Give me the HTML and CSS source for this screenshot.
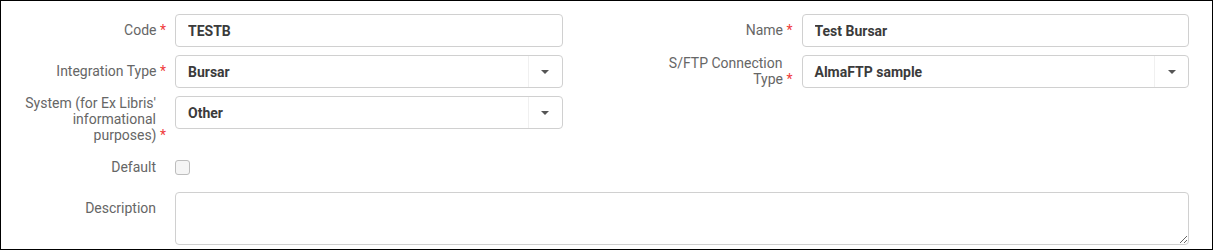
FILE: index.html
```html
<!DOCTYPE html>
<html>
<head>
    <title>Integration Profile</title>
    <meta name="viewport" content="width=device-width, initial-scale=1">
    <link rel="stylesheet" href="styles.css">
</head>
<body>
    <div class="panel">
        <div class="columns">
            <!-- Left column -->
            <div class="column">
                <div class="field">
                    <label class="field-label"><span class="label-text">Code <span class="req">*</span></span></label>
                    <input class="input" type="text" value="TESTB">
                </div>
                <div class="field">
                    <label class="field-label"><span class="label-text">Integration Type <span class="req">*</span></span></label>
                    <div class="select">
                        <span class="select-value">Bursar</span>
                        <span class="select-arrow"></span>
                    </div>
                </div>
                <div class="field">
                    <label class="field-label"><span class="label-text">System (for Ex Libris' informational purposes) <span class="req">*</span></span></label>
                    <div class="select">
                        <span class="select-value">Other</span>
                        <span class="select-arrow"></span>
                    </div>
                </div>
            </div>

            <!-- Right column -->
            <div class="column">
                <div class="field">
                    <label class="field-label"><span class="label-text">Name <span class="req">*</span></span></label>
                    <input class="input" type="text" value="Test Bursar">
                </div>
                <div class="field">
                    <label class="field-label"><span class="label-text">S/FTP Connection Type <span class="req">*</span></span></label>
                    <div class="select">
                        <span class="select-value">AlmaFTP sample</span>
                        <span class="select-arrow"></span>
                    </div>
                </div>
            </div>
        </div>

        <div class="field">
            <label class="field-label"><span class="label-text">Default</span></label>
            <div class="check-wrap">
                <input class="checkbox" type="checkbox">
            </div>
        </div>
        <div class="field">
            <label class="field-label"><span class="label-text">Description</span></label>
            <textarea class="textarea"></textarea>
        </div>
    </div>
</body>
</html>
```

FILE: styles.css
```css
body {
    margin: 0;
    background: #fff;
    font-family: Roboto, "Liberation Sans", Arial, sans-serif;
    font-size: 14px;
    color: #333;
}
.panel {
    width: 1213px;
    height: 250px;
    box-sizing: border-box;
    border: 1px solid #000;
    padding: 13px 23px 0 9px;
    display: flex;
    flex-direction: column;
    gap: 8px;
}
.columns {
    display: grid;
    grid-template-columns: 1fr 1fr;
    column-gap: 74px;
}
.column {
    display: flex;
    flex-direction: column;
    gap: 8px;
}
.field {
    display: grid;
    grid-template-columns: 156px 1fr;
    column-gap: 9px;
    align-items: start;
}
.field-label {
    display: flex;
    align-items: center;
    min-height: 33px;
    margin-top: -1px;
    padding: 0 10px 0 6px;
    line-height: 16px;
    color: #666;
}
.label-text {
    width: 100%;
    text-align: right;
}
.req {
    color: #ef3b3b;
    margin-right: -10px;
}
.input,
.select {
    box-sizing: border-box;
    height: 33px;
    border: 1px solid #d0d0d0;
    border-radius: 4px;
    background: #fff;
    font-family: inherit;
    font-size: 14px;
    font-weight: bold;
    color: #3b3b3b;
}
.input {
    width: 100%;
    padding: 0 12px;
    outline: none;
}
.select {
    display: flex;
    align-items: stretch;
}
.select-value {
    flex: 1;
    display: flex;
    align-items: center;
    padding: 0 12px;
}
.select-arrow {
    width: 33px;
    border-left: 1px solid #f0f0f0;
    display: flex;
    align-items: center;
    justify-content: center;
}
.select-arrow::before {
    content: "";
    border-left: 4px solid transparent;
    border-right: 4px solid transparent;
    border-top: 4px solid #555;
}
.check-wrap {
    display: flex;
    align-items: center;
    height: 33px;
}
.checkbox {
    appearance: none;
    margin: 0;
    width: 15px;
    height: 15px;
    border: 1px solid #bdbdbd;
    border-radius: 3px;
    background: #f5f5f5;
}
.textarea {
    box-sizing: border-box;
    width: 100%;
    height: 53px;
    border: 1px solid #d0d0d0;
    border-radius: 4px;
    font-family: inherit;
    font-size: 14px;
    margin: 0;
    padding: 6px 12px;
}
```
